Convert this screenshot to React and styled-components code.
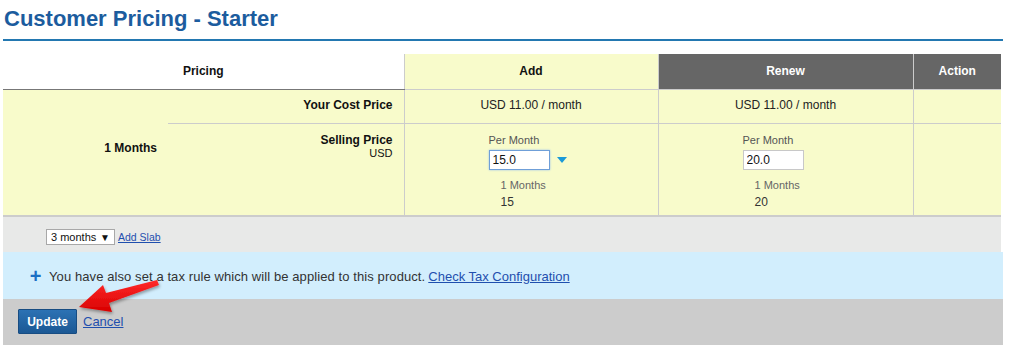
import * as React from "react";
import styled, { createGlobalStyle } from "styled-components";

const GlobalStyle = createGlobalStyle`
  body {
    margin: 0;
    background: #fff;
    font-family: "Liberation Sans", Arial, sans-serif;
    color: #222;
  }
`;

const App = () => {
  return (
    <Root>
      <GlobalStyle />
      <Page>
        <Title>Customer Pricing - Starter</Title>
        <PriceTable>
          <colgroup>
            <col style={{ width: 165 }} />
            <col style={{ width: 236 }} />
            <col style={{ width: 254 }} />
            <col style={{ width: 255 }} />
            <col style={{ width: 88 }} />
          </colgroup>
          <thead>
            <HeadRow>
              <HeadCell colSpan={2} $tone="plain">Pricing</HeadCell>
              <HeadCell $tone="yellow">Add</HeadCell>
              <HeadCell $tone="dark">Renew</HeadCell>
              <HeadCell $tone="dark">Action</HeadCell>
            </HeadRow>
          </thead>
          <tbody>
            <CostRow>
              <TenureCell rowSpan={2}>1 Months</TenureCell>
              <LabelCell>Your Cost Price</LabelCell>
              <ValueCell>USD 11.00 / month</ValueCell>
              <ValueCell>USD 11.00 / month</ValueCell>
              <ValueCell />
            </CostRow>
            <SellRow>
              <LabelCell $top>
                Selling Price
                <Currency>USD</Currency>
              </LabelCell>
              <PriceCell>
                <SmallLabel>Per Month</SmallLabel>
                <InputLine>
                  <PriceInput defaultValue="15.0" $focused />
                  <Caret viewBox="0 0 10 6">
                    <path d="M0 0 L10 0 L5 6 Z" fill="#1b9ad8" />
                  </Caret>
                </InputLine>
                <Summary>
                  <SummaryLabel>1 Months</SummaryLabel>
                  <SummaryValue>15</SummaryValue>
                </Summary>
              </PriceCell>
              <PriceCell>
                <SmallLabel>Per Month</SmallLabel>
                <InputLine>
                  <PriceInput defaultValue="20.0" />
                </InputLine>
                <Summary>
                  <SummaryLabel>1 Months</SummaryLabel>
                  <SummaryValue>20</SummaryValue>
                </Summary>
              </PriceCell>
              <ValueCell />
            </SellRow>
          </tbody>
        </PriceTable>
        <SlabBar>
          <SlabSelect>
            3 months <span>▼</span>
          </SlabSelect>
          <SmallLink href="#">Add Slab</SmallLink>
        </SlabBar>
        <InfoBar>
          <Plus>+</Plus>
          <InfoText>You have also set a tax rule which will be applied to this product.</InfoText>
          <InfoLink href="#" $gap={3}>Check Tax Configuration</InfoLink>
        </InfoBar>
        <Footer>
          <UpdateButton>Update</UpdateButton>
          <InfoLink href="#" $gap={4}>Cancel</InfoLink>
        </Footer>
      </Page>
      <Arrow width="1012" height="364" viewBox="0 0 1012 364">
        <defs>
          <linearGradient id="arrowFill" x1="0" y1="0" x2="0" y2="1">
            <stop offset="0" stopColor="#ff2a2a" />
            <stop offset="1" stopColor="#d80000" />
          </linearGradient>
          <filter id="arrowShadow" x="-20%" y="-40%" width="140%" height="180%">
            <feDropShadow dx="1" dy="2" stdDeviation="1.5" floodColor="#000" floodOpacity="0.35" />
          </filter>
        </defs>
        <polygon
          points="79,307 103,285 106,293 157,280 159,285 109,303 112,312"
          fill="url(#arrowFill)"
          filter="url(#arrowShadow)"
        />
      </Arrow>
    </Root>
  );
};

const Root = styled.div`
  position: relative;
  width: 1012px;
  height: 364px;
  overflow: hidden;
`;

const Page = styled.div`
  margin-left: 3px;
  width: 1000px;
`;

const Title = styled.h1`
  margin: 0;
  padding: 8px 0 9px 1px;
  font-size: 22px;
  line-height: 22px;
  font-weight: bold;
  color: #1c5c9e;
  border-bottom: 2px solid #2378b1;
`;

const PriceTable = styled.table`
  margin-top: 13px;
  width: 998px;
  border-collapse: collapse;
  table-layout: fixed;
  font-size: 12px;
`;

const HeadRow = styled.tr`
  height: 35px;
`;

const toneBg = { plain: "#fff", yellow: "#f8fbcb", dark: "#666" };

const HeadCell = styled.th`
  padding: 0;
  font-size: 12px;
  font-weight: bold;
  text-align: center;
  background: ${(p) => toneBg[p.$tone]};
  color: ${(p) => (p.$tone === "dark" ? "#fff" : "#111")};
  border-left: ${(p) => (p.$tone === "plain" ? "none" : "1px solid #ccc")};
  border-bottom: 1px solid ${(p) => (p.$tone === "plain" ? "#777" : "#ccc")};
`;

const CostRow = styled.tr`
  height: 34px;
  background: #f8fbcb;

  td {
    padding-bottom: 3px;
  }
`;

const SellRow = styled.tr`
  height: 93px;
  background: #f8fbcb;
  border-bottom: 2px solid #ccc;
`;

const TenureCell = styled.td`
  padding: 0 11px 0 0;
  text-align: right;
  font-weight: bold;
  vertical-align: middle;
  color: #111;

  tr & {
    padding-bottom: 8px;
  }
`;

const LabelCell = styled.td`
  padding: ${(p) => (p.$top ? "9px 11px 0 0" : "0 11px 0 0")};
  text-align: right;
  font-weight: bold;
  vertical-align: ${(p) => (p.$top ? "top" : "middle")};
  border-bottom: 1px solid #ccc;
  color: #111;
  line-height: 14px;
`;

const Currency = styled.div`
  font-size: 11px;
  font-weight: normal;
  line-height: 13px;
`;

const ValueCell = styled.td`
  padding: 0;
  text-align: center;
  vertical-align: middle;
  border-left: 1px solid #ccc;
  border-bottom: 1px solid #ccc;
  color: #222;
`;

const PriceCell = styled.td`
  padding: 10px 0 0 84px;
  vertical-align: top;
  border-left: 1px solid #ccc;
  border-bottom: 1px solid #ccc;
`;

const SmallLabel = styled.div`
  font-size: 11px;
  line-height: 13px;
  color: #555;
`;

const InputLine = styled.div`
  display: flex;
  align-items: center;
  gap: 7px;
  margin-top: 3px;
`;

const PriceInput = styled.input`
  box-sizing: border-box;
  width: 61px;
  height: 20px;
  padding: 0 3px;
  font-family: "Liberation Sans", Arial, sans-serif;
  font-size: 12px;
  color: #111;
  background: #fff;
  border: 1px solid ${(p) => (p.$focused ? "#6f9fd8" : "#c8c8c8")};
  box-shadow: ${(p) => (p.$focused ? "0 0 2px #9cc2ee" : "none")};
  outline: none;
`;

const Caret = styled.svg`
  width: 10px;
  height: 6px;
`;

const Summary = styled.div`
  margin: 8px 0 0 12px;
`;

const SummaryLabel = styled.div`
  font-size: 11px;
  line-height: 14px;
  color: #666;
`;

const SummaryValue = styled.div`
  margin-top: 3px;
  font-size: 12px;
  line-height: 14px;
  color: #333;
`;

const SlabBar = styled.div`
  width: 998px;
  height: 35px;
  box-sizing: border-box;
  padding: 12px 0 0 43px;
  display: flex;
  align-items: flex-start;
  gap: 3px;
  background: #e8e9e8;
`;

const SlabSelect = styled.div`
  box-sizing: border-box;
  height: 16px;
  width: 69px;
  padding: 0 4px;
  display: flex;
  align-items: center;
  justify-content: space-between;
  background: #fff;
  border: 1px solid #a8a8a8;
  font-size: 11px;
  color: #111;

  span {
    font-size: 10px;
  }
`;

const SmallLink = styled.a`
  font-size: 10.5px;
  line-height: 16px;
  color: #1f4fae;
  text-decoration: underline;
`;

const InfoBar = styled.div`
  height: 47px;
  box-sizing: border-box;
  padding: 2px 0 0 25px;
  display: flex;
  align-items: center;
  background: #d2eefd;
  font-size: 13px;
  color: #333;
`;

const InfoText = styled.span`
  letter-spacing: 0.09px;
`;

const Plus = styled.span`
  width: 15px;
  margin-right: 6px;
  font-size: 20px;
  font-weight: bold;
  color: #1b6fc4;
  line-height: 13px;
  text-align: center;
`;

const InfoLink = styled.a`
  margin-left: ${(p) => p.$gap}px;
  font-size: 13px;
  color: #1f4fae;
  text-decoration: underline;
`;

const Footer = styled.div`
  height: 46px;
  box-sizing: border-box;
  padding: 10px 0 0 15px;
  display: flex;
  align-items: flex-start;
  gap: 2px;
  background: #cccccc;

  ${InfoLink} {
    line-height: 25px;
  }
`;

const UpdateButton = styled.button`
  width: 59px;
  height: 25px;
  padding: 0;
  font-family: "Liberation Sans", Arial, sans-serif;
  font-size: 12px;
  font-weight: bold;
  color: #fff;
  background: linear-gradient(#2c72b4, #1b5894);
  border: 1px solid #174c82;
  border-radius: 1px;
`;

const Arrow = styled.svg`
  position: absolute;
  left: 0;
  top: 0;
  pointer-events: none;
`;

export default App;
